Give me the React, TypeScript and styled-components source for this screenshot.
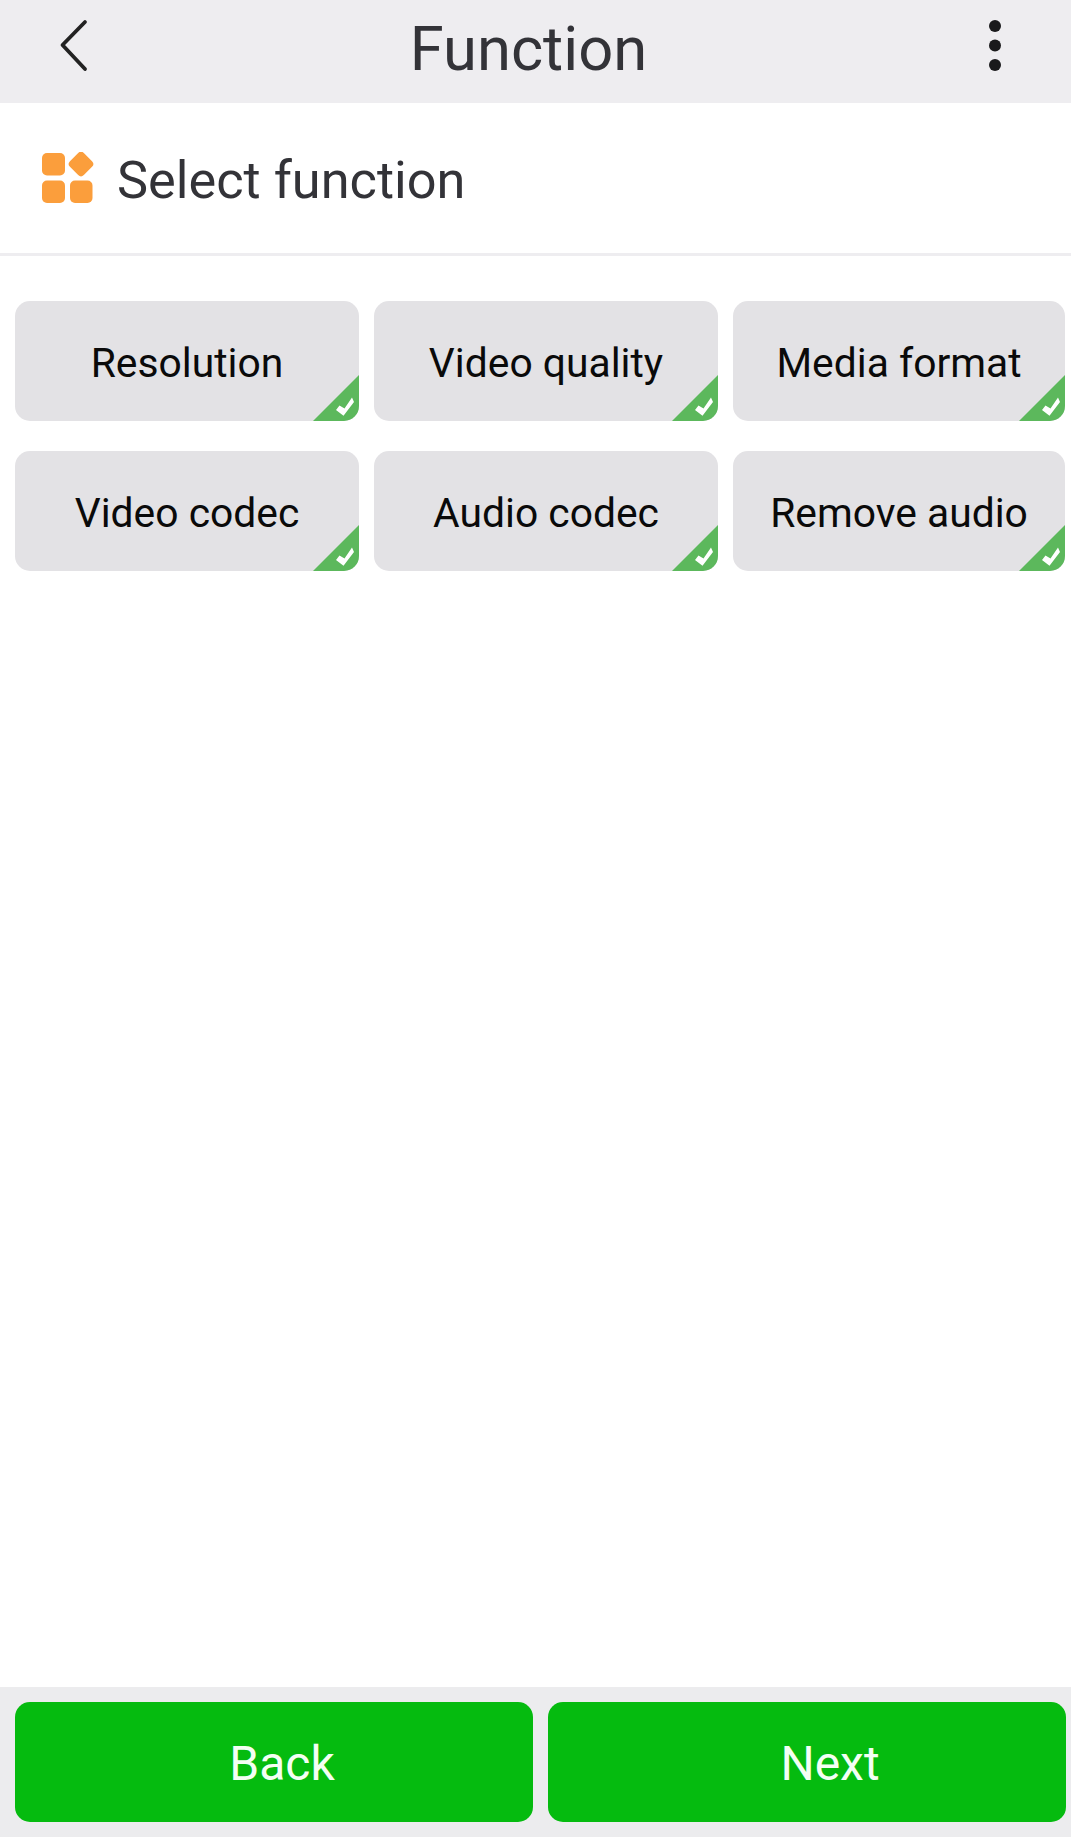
import React from "react";
import styled, { createGlobalStyle } from "styled-components";

const Global = createGlobalStyle`
  html, body { margin: 0; padding: 0; background: #fff; }
  * { box-sizing: border-box; }
  body { font-family: Roboto, "Liberation Sans", sans-serif; }
`;

const Page = styled.div`
  display: flex;
  flex-direction: column;
  width: 1071px;
  height: 1837px;
  overflow: hidden;
  background: #fff;
`;

const Header = styled.header`
  display: grid;
  grid-template-columns: 100px 1fr 114px;
  align-items: center;
  height: 103px;
  background: #eeedf0;
`;

const HeaderIcon = styled.svg`
  display: block;
`;

const Title = styled.h1`
  margin: 0 0 6px;
  font-size: 61.5px;
  line-height: 96px;
  font-weight: 400;
  text-align: center;
  color: #333338;
`;

const SectionHeader = styled.div`
  display: flex;
  align-items: center;
  gap: 23px;
  height: 153px;
  padding-left: 42px;
  border-bottom: 3px solid #eeedf0;
`;

const SectionTitle = styled.h2`
  margin: 0;
  padding-top: 4px;
  font-size: 52.3px;
  line-height: 60px;
  font-weight: 400;
  color: #333338;
`;

const Options = styled.div`
  display: grid;
  grid-template-columns: 344px 344px 332px;
  grid-auto-rows: 120px;
  gap: 30px 15px;
  padding: 45px 0 0 15px;
  flex: 1;
`;

const Option = styled.button`
  position: relative;
  overflow: hidden;
  padding: 4px 0 0;
  border: 0;
  border-radius: 15px;
  background: #e3e2e5;
  color: #0a0a0a;
  font: 400 40.8px Roboto, sans-serif;
`;

const Tick = styled.svg`
  position: absolute;
  right: 0;
  bottom: 0;
`;

const Footer = styled.footer`
  display: grid;
  grid-template-columns: 518px 518px;
  gap: 15px;
  height: 150px;
  padding: 15px 0 15px 15px;
  background: #ececee;
`;

const ActionButton = styled.button<{ $shift: number }>`
  padding: 2px 0 0 ${(p) => p.$shift}px;
  border: 0;
  border-radius: 15px;
  background: #05bb0f;
  color: #f4fff4;
  font: 400 48px Roboto, sans-serif;
`;

const options = ["Resolution", "Video quality", "Media format", "Video codec", "Audio codec", "Remove audio"];

export default function App() {
  return (
    <Page>
      <Global />
      <Header>
        <HeaderIcon width="100" height="103" viewBox="0 0 100 103">
          <path d="M85 22 L62.5 45 L85 69" fill="none" stroke="#222" strokeWidth="3.8" strokeLinecap="round" strokeLinejoin="round" />
        </HeaderIcon>
        <Title>Function</Title>
        <HeaderIcon width="114" height="103" viewBox="0 0 114 103">
          <circle cx="38" cy="26" r="6" fill="#1a1a1c" />
          <circle cx="38" cy="45.5" r="6" fill="#1a1a1c" />
          <circle cx="38" cy="65" r="6" fill="#1a1a1c" />
        </HeaderIcon>
      </Header>
      <SectionHeader>
        <svg width="52" height="52" viewBox="0 0 52 52">
          <rect x="0" y="1" width="23" height="22.5" rx="5" fill="#fb9e3c" />
          <rect x="0" y="28.5" width="23" height="22.5" rx="5" fill="#fb9e3c" />
          <rect x="28" y="28.5" width="22.5" height="22.5" rx="5" fill="#fb9e3c" />
          <rect x="29.2" y="2.2" width="19.6" height="19.6" rx="4" transform="rotate(45 39 12)" fill="#fb9e3c" />
        </svg>
        <SectionTitle>Select function</SectionTitle>
      </SectionHeader>
      <Options>
        {options.map((o) => (
          <Option key={o}>
            {o}
            <Tick width="46" height="46" viewBox="0 0 46 46">
              <path d="M46 0 V46 H0 Z" fill="#5cb85c" />
              <path d="M23 35 L26.5 30.5 L31.5 33.5 L39 22.5 L41 27 L30.5 40.7 Z" fill="#fff" />
            </Tick>
          </Option>
        ))}
      </Options>
      <Footer>
        <ActionButton $shift={16}>Back</ActionButton>
        <ActionButton $shift={46}>Next</ActionButton>
      </Footer>
    </Page>
  );
}
